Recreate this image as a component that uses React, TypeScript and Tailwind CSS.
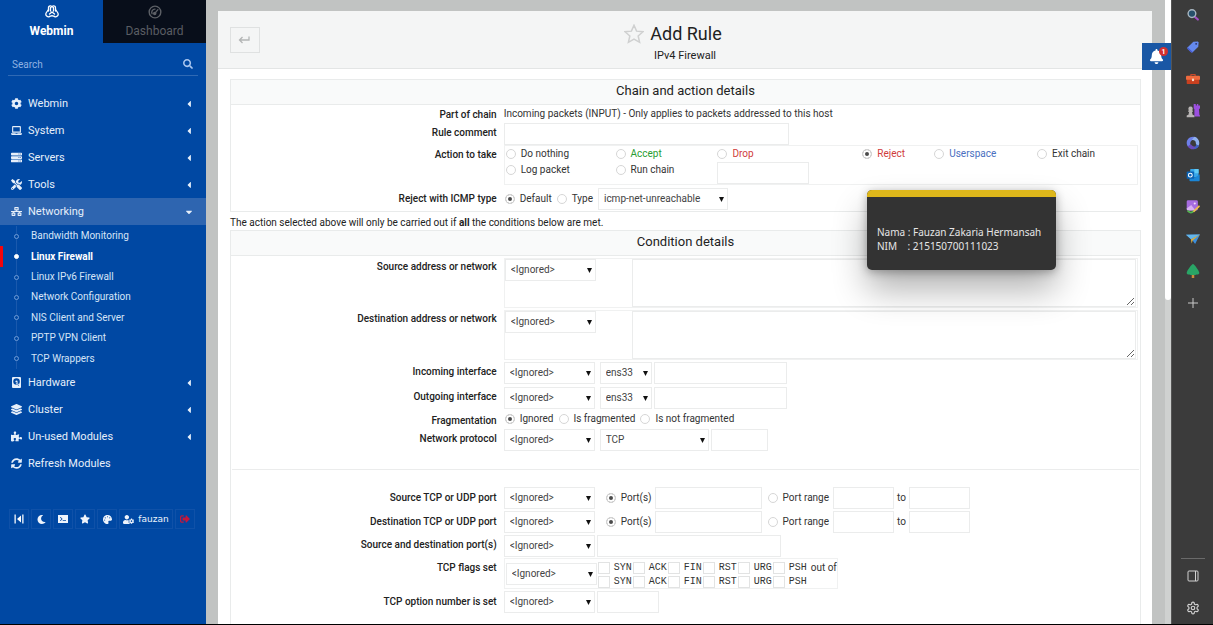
import React, { useId } from "react";
import {
  FaCog,
  FaServer,
  FaTools,
  FaNetworkWired,
  FaLayerGroup,
  FaPuzzlePiece,
  FaSyncAlt,
  FaSearch,
  FaMoon,
  FaTerminal,
  FaStar,
  FaPalette,
  FaUserCog,
  FaSignOutAlt,
  FaBell,
  FaLaptop,
  FaCaretLeft,
  FaCaretDown,
} from "react-icons/fa";
import { LuSettings } from "react-icons/lu";

const field = "h-[22px] border border-[#ebecec] bg-white px-1.5 text-[10px] text-[#444] outline-none";

function TextField({ label, className }: { label: string; className: string }) {
  return <input type="text" aria-label={label} className={`${field} ${className}`} />;
}

function SelectField({ label, value, className = "w-[91px]" }: { label: string; value: string; className?: string }) {
  return (
    <span className={`relative block shrink-0 ${className}`}>
      <select aria-label={label} defaultValue={value} className={`${field} block w-full appearance-none pl-[5px] pr-3`}>
        <option>{value}</option>
      </select>
      <svg viewBox="0 0 6 6" className="pointer-events-none absolute right-1 top-[9px] size-[5px]" aria-hidden="true">
        <path d="M0 0h6L3 6z" fill="#111" />
      </svg>
    </span>
  );
}

function Radio({
  name,
  label,
  checked = false,
  className = "gap-[5px]",
  textClass = "text-[#333]",
}: {
  name: string;
  label: string;
  checked?: boolean;
  className?: string;
  textClass?: string;
}) {
  const id = useId();
  return (
    <span className={`flex h-4 items-center whitespace-nowrap ${className}`}>
      <input
        id={id}
        type="radio"
        name={name}
        defaultChecked={checked}
        className="size-2.5 shrink-0 appearance-none rounded-full border border-[#d6d6d6] bg-white checked:bg-[#4a4a4a] checked:shadow-[inset_0_0_0_2px_#fff]"
      />
      <label htmlFor={id} className={textClass}>
        {label}
      </label>
    </span>
  );
}

function Row({ label, height, top = "pt-px", children }: { label: string; height: string; top?: string; children: React.ReactNode }) {
  return (
    <div className={`grid grid-cols-[30%_1fr] ${height}`}>
      <div className={`pr-[7px] text-right font-medium leading-[21px] text-[#222] ${top}`}>{label}</div>
      <div className="min-w-0 pr-0.5">{children}</div>
    </div>
  );
}

function Panel({ title, children }: { title: string; children: React.ReactNode }) {
  return (
    <section className="border border-[#e9ebeb]">
      <h2 className="h-[25px] border-b border-[#e9ebeb] bg-[#f9fafa] text-center text-[13px] leading-[22px] text-[#222]">{title}</h2>
      {children}
    </section>
  );
}

function AddressRow({ label }: { label: string }) {
  return (
    <Row label={label} height="h-[52px]" top="pt-0">
      <div className="pt-0.5">
        <div className="flex h-[50px] border border-[#f0f1f1] pr-px">
          <div className="w-[127px] shrink-0">
            <SelectField label={`${label} mode`} value="<Ignored>" />
          </div>
          <textarea aria-label={label} className="h-full min-w-0 flex-1 resize border border-[#ebecec] outline-none" />
        </div>
      </div>
    </Row>
  );
}

function InterfaceRow({ label }: { label: string }) {
  return (
    <Row label={label} height="h-[25px]">
      <div className="flex pt-0.5">
        <SelectField label={`${label} mode`} value="<Ignored>" />
        <SelectField label={label} value="ens33" className="ml-[5px] w-[52px]" />
        <TextField label={`${label} name`} className="ml-0.5 w-[133px]" />
      </div>
    </Row>
  );
}

function PortRow({ label, name }: { label: string; name: string }) {
  return (
    <Row label={label} height="h-6" top="pt-0.5">
      <div className="flex items-center pt-0.5">
        <SelectField label={`${label} mode`} value="<Ignored>" />
        <Radio name={name} label="Port(s)" checked className="ml-[11px] gap-[5px]" />
        <TextField label={`${label} list`} className="ml-[3px] w-[107px]" />
        <Radio name={name} label="Port range" className="ml-1.5 gap-[5px]" />
        <TextField label={`${label} from`} className="ml-1 w-[61px]" />
        <span className="mx-[3px] text-[#333]">to</span>
        <TextField label={`${label} to`} className="w-[61px]" />
      </div>
    </Row>
  );
}

const flags = ["SYN", "ACK", "FIN", "RST", "URG", "PSH"];

function FlagLine({ group, after }: { group: string; after?: string }) {
  return (
    <div className="flex h-3.5 items-center">
      {flags.map((f) => (
        <label key={f} className="flex w-[35px] items-center gap-1 whitespace-nowrap font-['Liberation_Mono',monospace] text-[#333]">
          <input
            type="checkbox"
            name={`${group}-${f}`}
            className="size-3 shrink-0 appearance-none border border-[#e2e3e3] bg-white checked:bg-[#4a4a4a]"
          />
          {f}
        </label>
      ))}
      {after && <span className="ml-[3px] whitespace-nowrap text-[#333]">{after}</span>}
    </div>
  );
}

function WebminLogo() {
  return (
    <svg viewBox="0 0 28 28" className="size-3.5" fill="none" stroke="#fff" strokeWidth="2.600" strokeLinejoin="round" strokeLinecap="round" aria-hidden="true">
      <path d="M7 12V5.500a3.500 3.500 0 0 1 7-.5a3.500 3.500 0 0 1 7 .5V12" />
      <path d="M7 9L2.500 15.500c-2.500 4.500 1 8.500 5 8 3-.5 4-2 6.500-2s3.500 1.500 6.500 2c4 .5 7.500-3.500 5-8L21 9" />
      <path d="M11 5v7M17 5v7M14 14l-5 4M14 14l5 4" />
    </svg>
  );
}

function GaugeIcon() {
  return (
    <svg viewBox="0 0 24 24" className="size-3.5" fill="none" stroke="#5d6066" strokeWidth="2.400" strokeLinecap="round" aria-hidden="true">
      <circle cx="12" cy="12" r="10" />
      <path d="M12 14l5-6M7 15a5.500 5.500 0 0 1 5-8" />
      <circle cx="11.500" cy="14.500" r="1.800" fill="#5d6066" />
    </svg>
  );
}

function DiskIcon({ className = "" }: { className?: string }) {
  return (
    <svg viewBox="0 0 22 22" className={className} aria-hidden="true">
      <path d="M4 0h14a2 2 0 0 1 2 2v18a2 2 0 0 1-2 2H4a2 2 0 0 1-2-2V2a2 2 0 0 1 2-2z" fill="#e6effa" />
      <circle cx="11" cy="9" r="6.500" fill="#0048a3" />
      <circle cx="11" cy="9" r="2.200" fill="#e6effa" />
      <path d="M11 11l4.500 7" stroke="#e6effa" strokeWidth="3.500" />
      <path d="M11 11l4.500 7" stroke="#0048a3" strokeWidth="1.200" />
    </svg>
  );
}

function CollapseIcon() {
  return (
    <svg viewBox="0 0 20 20" className="size-2.5" fill="#fff" aria-hidden="true">
      <path d="M1 1h2.500v18H1zM16.500 1H19v18h-2.500zM14 3v14l-8-7z" />
    </svg>
  );
}

const topItems = [
  { label: "Webmin", icon: FaCog },
  { label: "System", icon: FaLaptop },
  { label: "Servers", icon: FaServer },
  { label: "Tools", icon: FaTools },
];
const lowItems = [
  { label: "Hardware", icon: DiskIcon },
  { label: "Cluster", icon: FaLayerGroup },
  { label: "Un-used Modules", icon: FaPuzzlePiece },
  { label: "Refresh Modules", icon: FaSyncAlt, leaf: true },
];
const networking = [
  "Bandwidth Monitoring",
  "Linux Firewall",
  "Linux IPv6 Firewall",
  "Network Configuration",
  "NIS Client and Server",
  "PPTP VPN Client",
  "TCP Wrappers",
];

function NavItem({ label, icon: Icon, leaf = false, open = false }: { label: string; icon: React.ComponentType<{ className?: string }>; leaf?: boolean; open?: boolean }) {
  return (
    <a href="#" className={`flex h-[27px] items-center pl-[11px] pr-3 text-[11px] text-[#e6effa] ${open ? "bg-[#2e65b0]" : ""}`}>
      <Icon className="size-[11px] shrink-0" />
      <span className="ml-1.5 flex-1">{label}</span>
      {!leaf && (open ? <FaCaretDown className="size-2.5" /> : <FaCaretLeft className="size-2.5" />)}
    </a>
  );
}

function Sidebar() {
  const tool = "flex h-5 items-center justify-center border border-[#0f51a8] text-[#eef4fc]";
  return (
    <aside className="flex w-[206px] shrink-0 flex-col bg-[#0048a3]">
      <div className="grid h-[43px] grid-cols-2 text-[12px]">
        <a href="#" className="flex flex-col items-center gap-1 pt-[5px] font-bold leading-4 text-white">
          <WebminLogo />
          Webmin
        </a>
        <a href="#" className="flex flex-col items-center gap-1 bg-[#080e1a] pt-[5px] leading-4 text-[#5a5d63]">
          <GaugeIcon />
          Dashboard
        </a>
      </div>
      <div className="mx-2 mt-2.5 flex h-[23px] items-center border-b border-[#2f69b4] pl-1 pr-[5px]">
        <input
          type="search"
          aria-label="Search"
          placeholder="Search"
          className="min-w-0 flex-1 bg-transparent pt-px text-[10px] outline-none placeholder:text-[#8fb2e2]"
        />
        <FaSearch className="size-2.5 text-[#a9c6ef]" />
      </div>
      <nav className="mt-3.5">
        {topItems.map((i) => (
          <NavItem key={i.label} {...i} />
        ))}
        <NavItem label="Networking" icon={FaNetworkWired} open />
        <ul className="flex h-36 flex-col pt-px">
          {networking.map((n) => {
            const active = n === "Linux Firewall";
            return (
              <li key={n} className={`flex flex-1 items-center border-l-[3px] ${active ? "border-[#f3050c] font-bold text-white" : "border-transparent text-[#d5e4f7]"}`}>
                <span className="ml-[11px] flex w-[5px] flex-col items-center self-stretch">
                  <span className="w-px flex-1 bg-[#1a59ad]" />
                  <span className={`size-[5px] rounded-full border ${active ? "border-white bg-white" : "border-[#6f9bd6]"}`} />
                  <span className="w-px flex-1 bg-[#1a59ad]" />
                </span>
                <a href="#" className="ml-3">
                  {n}
                </a>
              </li>
            );
          })}
        </ul>
        {lowItems.map((i) => (
          <NavItem key={i.label} {...i} />
        ))}
      </nav>
      <div className="ml-[9px] mr-[11px] mt-8 flex gap-0.5">
        <button aria-label="Collapse menu" className={`${tool} w-5`}>
          <CollapseIcon />
        </button>
        <button aria-label="Night mode" className={`${tool} w-5`}>
          <FaMoon className="size-[9px]" />
        </button>
        <button aria-label="Terminal" className={`${tool} w-5`}>
          <span className="flex h-2 w-2.5 items-center justify-center bg-[#eef4fc] text-[#0048a3]">
            <FaTerminal className="size-1.5" />
          </span>
        </button>
        <button aria-label="Favorites" className={`${tool} w-5`}>
          <FaStar className="size-2.5" />
        </button>
        <button aria-label="Theme" className={`${tool} w-5`}>
          <FaPalette className="size-[9px]" />
        </button>
        <button className={`${tool} flex-1 gap-1 font-['DejaVu_Sans',sans-serif] text-[9px]`}>
          <FaUserCog className="size-[11px]" />
          fauzan
        </button>
        <button aria-label="Log out" className={`${tool} w-5`}>
          <FaSignOutAlt className="size-2.5 text-[#c4183c]" />
        </button>
      </div>
    </aside>
  );
}

const railIcons: { label: string; art: React.ReactNode }[] = [
  {
    label: "Search",
    art: (
      <>
        <path d="M12.500 12.500l4.500 4" stroke="#a34fc6" strokeWidth="3" strokeLinecap="round" />
        <circle cx="8.500" cy="8" r="5.500" fill="#27506b" stroke="#a9b7c2" strokeWidth="2" />
      </>
    ),
  },
  {
    label: "Shopping",
    art: (
      <>
        <path d="M10.500 2.500L17 2l1 1.500-.5 6-8 8-2 .5L2 12.500l.5-2z" fill="#6489ee" />
        <path d="M2 12.500l.5-2 7.500 7-2.500.5z" fill="#4858cf" />
        <circle cx="14.500" cy="5.500" r="1.300" fill="#2b3060" />
      </>
    ),
  },
  {
    label: "Tools",
    art: (
      <>
        <path d="M7 6V3.500h6V6" fill="none" stroke="#c6482a" strokeWidth="1.600" />
        <rect x="0" y="5.500" width="20" height="6" rx="1.500" fill="#ee6a3e" />
        <path d="M1 11h18v5a1 1 0 0 1-1 1H2a1 1 0 0 1-1-1z" fill="#c9401f" />
        <rect x="8.500" y="9.500" width="3" height="3.500" fill="#f5d9c7" />
      </>
    ),
  },
  {
    label: "Games",
    art: (
      <>
        <path d="M12 0h2v2h1.500V0h2v2H20v4l-1.500 1.500.7 8.500H20v2h-8V7.500L11 6V0z" fill="#9b4fe0" />
        <path d="M6.500 3.500a3.200 3.200 0 0 1 2 5.700h1.500v1.800H8.500l1 4.500 2.500 1V19H1v-2.500l2.500-1 1-4.500H3V9.200h1.500a3.200 3.200 0 0 1 2-5.700z" fill="#b8b4b4" />
      </>
    ),
  },
  {
    label: "Microsoft 365",
    art: (
      <>
        <path d="M10 1C5 1 1 5 1 10c0 2 .8 4 2 5.500 2-1 3-2 3-4.500 0-4 3-6 6-5.500L15 2.500A9 9 0 0 0 10 1z" fill="#6d7fe8" />
        <path d="M12 1.200c4 1 7 4.500 7 8.800 0 1.500-.5 3-1 4-2-.5-4-1-4-4.500C14 7 11 5 8 6z" fill="#8fb0ee" />
        <path d="M2.500 14.500C4 17.500 7 19 10 19c4 0 7-2 8.500-5.500-3 2-9 3-12-2.500-.5 2-2 3-4 3.500z" fill="#6a4bbd" />
        <path d="M18.500 13.500C17 17 14 19 10 19c2-1 4-4 4.500-7z" fill="#3f62c4" />
      </>
    ),
  },
  {
    label: "Outlook",
    art: (
      <>
        <rect x="6" y="1.500" width="12" height="12" rx="1" fill="#37a5e8" />
        <path d="M12 1.500h6v6h-6z" fill="#62cbf5" />
        <path d="M5 9l7.500 5L19.500 9v9a1 1 0 0 1-1 1H6a1 1 0 0 1-1-1z" fill="#1b86d6" />
        <rect x="1" y="5" width="10.500" height="10.500" rx="1" fill="#0a62b4" />
        <circle cx="6.200" cy="10.200" r="2.700" fill="none" stroke="#fff" strokeWidth="1.500" />
      </>
    ),
  },
  {
    label: "Image Creator",
    art: (
      <>
        <rect x="1" y="0.500" width="16" height="14.500" rx="2" fill="#a66be0" />
        <path d="M1 12l6.500-5 6 8H3a2 2 0 0 1-2-2z" fill="#d7b0f2" />
        <circle cx="12.500" cy="5" r="1.500" fill="#f5dff9" />
        <path d="M3 16c3 3 6 2 8 0" stroke="#53b34f" strokeWidth="2.600" fill="none" strokeLinecap="round" />
        <path d="M18.500 9l-7 7" stroke="#eebb4c" strokeWidth="2.600" strokeLinecap="round" />
      </>
    ),
  },
  {
    label: "Drop",
    art: (
      <>
        <path d="M0 4l20-.5L13 17l-3.500-5z" fill="#3d8fdc" />
        <path d="M0 4l20-.5L7 10.500z" fill="#63b6ec" />
        <path d="M7 10.500l13-7L9.500 12 8 16.500z" fill="#d9ad42" />
      </>
    ),
  },
  {
    label: "Tree",
    art: (
      <>
        <rect x="8.200" y="14" width="3.600" height="6" fill="#c98a3c" />
        <path d="M10 0c1.500 0 8.500 9 9 12.500.3 2-2 3-4 2.500-1.500 1-8.500 1-10 0-2 .5-4.300-.5-4-2.500C1.500 9 8.500 0 10 0z" fill="#29a566" />
      </>
    ),
  },
];

function BrowserRail() {
  return (
    <aside className="flex w-[42px] shrink-0 flex-col items-center border-l border-[#555] bg-[#3b3b3b]">
      {railIcons.map((i) => (
        <button key={i.label} aria-label={i.label} className="flex h-8 w-full items-center justify-center pb-[3px]">
          <svg viewBox="0 0 20 20" className="size-3.5">
            {i.art}
          </svg>
        </button>
      ))}
      <button aria-label="Add" className="flex h-8 w-full items-center justify-center pb-[3px]">
        <svg viewBox="0 0 10 10" className="size-2.5" stroke="#c9c9c9" strokeWidth="1">
          <path d="M5 0v10M0 5h10" />
        </svg>
      </button>
      <div className="mt-auto w-6 border-t border-[#6a6a6a]" />
      <button aria-label="Toggle panel" className="flex h-8 w-full items-center justify-center pt-0.5">
        <svg viewBox="0 0 12 12" className="size-3" fill="none" stroke="#d2d2d2">
          <rect x="1" y="1" width="10" height="10" rx="1" />
          <path d="M8.500 1v10" />
        </svg>
      </button>
      <button aria-label="Settings" className="flex h-[33px] w-full items-center justify-center">
        <LuSettings className="size-3.5 text-[#d2d2d2]" />
      </button>
    </aside>
  );
}

export default function App() {
  return (
    <div className="relative flex h-screen overflow-hidden border-b border-black bg-[#c1c3c2] font-[Roboto,sans-serif] text-[10px] leading-4 text-[#333]">
      <Sidebar />
      <main className="flex min-w-0 flex-1 flex-col overflow-hidden pl-3 pr-[13px] pt-[11px]">
        <div className="shrink-0 bg-white pb-10">
          <header className="relative flex h-[58px] flex-col items-center border-b border-[#e3e5e5] bg-[#f4f5f5] pt-[11px]">
            <button aria-label="Go back" className="absolute left-3 top-4 flex h-[26px] w-[30px] items-center justify-center border border-[#dfe1e1] pr-0.5">
              <svg viewBox="0 0 12 8" className="h-2 w-3" fill="none" stroke="#b3b5b5" strokeWidth="1.300" aria-hidden="true">
                <path d="M11 .5V4H1.500M4.500 1L1.500 4l3 3" />
              </svg>
            </button>
            <h1 className="flex h-6 items-center gap-1.5 pr-6 text-[18px] text-[#222]">
              <svg viewBox="0 0 24 24" className="size-5" fill="none" stroke="#cfd0d0" strokeWidth="1.800" aria-hidden="true">
                <path d="M12 1.500l3.100 7.100 7.700.7-5.800 5.100 1.700 7.600L12 18l-6.700 4 1.700-7.600-5.800-5.100 7.700-.7z" />
              </svg>
              Add Rule
            </h1>
            <p className="mt-0.5 text-[11px] text-[#222]">IPv4 Firewall</p>
          </header>

          <form className="pl-3 pr-[11px] pt-2.5" onSubmit={(e) => e.preventDefault()}>
            <Panel title="Chain and action details">
              <Row label="Part of chain" height="h-4" top="-mt-px">
                <p className="pt-px">Incoming packets (INPUT) - Only applies to packets addressed to this host</p>
              </Row>
              <Row label="Rule comment" height="h-[23px]">
                <div className="pt-0.5">
                  <TextField label="Rule comment" className="block w-[285px]" />
                </div>
              </Row>
              <Row label="Action to take" height="h-[42px]" top="pt-0">
                <div className="mt-px grid h-10 grid-cols-[110fr_102fr_145fr_72fr_103fr_100fr] grid-rows-[16px_22px] items-start border border-[#f0f1f1] pl-px">
                  <Radio name="action" label="Do nothing" />
                  <Radio name="action" label="Accept" textClass="text-[#2a9d32]" />
                  <Radio name="action" label="Drop" textClass="text-[#d03c3c]" />
                  <Radio name="action" label="Reject" checked textClass="text-[#d03c3c]" />
                  <Radio name="action" label="Userspace" textClass="text-[#4a6fc0]" />
                  <Radio name="action" label="Exit chain" />
                  <Radio name="action" label="Log packet" />
                  <Radio name="action" label="Run chain" />
                  <TextField label="Chain name" className="w-[92px]" />
                </div>
              </Row>
              <Row label="Reject with ICMP type" height="h-[25px]" top="pt-0.5">
                <div className="flex items-center gap-[5px] pl-px pt-0.5">
                  <Radio name="icmp" label="Default" checked />
                  <Radio name="icmp" label="Type" />
                  <SelectField label="ICMP type" value="icmp-net-unreachable" className="w-[130px]" />
                </div>
              </Row>
            </Panel>

            <p className="h-[18px] pt-[3px] text-[#222]">
              The action selected above will only be carried out if <b>all</b> the conditions below are met.
            </p>

            <Panel title="Condition details">
              <AddressRow label="Source address or network" />
              <AddressRow label="Destination address or network" />
              <InterfaceRow label="Incoming interface" />
              <InterfaceRow label="Outgoing interface" />
              <Row label="Fragmentation" height="h-[17px]" top="pt-0">
                <div className="flex gap-[5px] pl-px pt-px">
                  <Radio name="frag" label="Ignored" checked />
                  <Radio name="frag" label="Is fragmented" />
                  <Radio name="frag" label="Is not fragmented" />
                </div>
              </Row>
              <Row label="Network protocol" height="h-[25px]">
                <div className="flex pt-0.5">
                  <SelectField label="Network protocol mode" value="<Ignored>" />
                  <SelectField label="Network protocol" value="TCP" className="ml-[5px] w-[109px]" />
                  <TextField label="Protocol number" className="ml-0.5 w-[57px]" />
                </div>
              </Row>
              <hr className="mx-px mb-[15px] mt-[17px] border-[#ebecec]" />
              <PortRow label="Source TCP or UDP port" name="sport" />
              <PortRow label="Destination TCP or UDP port" name="dport" />
              <Row label="Source and destination port(s)" height="h-6">
                <div className="flex gap-0.5 pt-0.5">
                  <SelectField label="Ports mode" value="<Ignored>" />
                  <TextField label="Ports" className="w-[184px]" />
                </div>
              </Row>
              <Row label="TCP flags set" height="h-8" top="pt-0">
                <div className="mt-px inline-flex h-[31px] items-center border border-[#f0f1f1] pl-px">
                  <SelectField label="TCP flags mode" value="<Ignored>" />
                  <div className="ml-px pt-0.5">
                    <FlagLine group="set" after="out of" />
                    <FlagLine group="mask" />
                  </div>
                </div>
              </Row>
              <Row label="TCP option number is set" height="h-16" top="pt-0.5">
                <div className="flex gap-0.5 pt-0.5">
                  <SelectField label="TCP option mode" value="<Ignored>" />
                  <TextField label="TCP option number" className="w-[62px]" />
                </div>
              </Row>
            </Panel>
          </form>
        </div>
      </main>
      <div className="flex w-1.5 shrink-0 flex-col bg-[#cfd1d0]">
        <div className="h-[48%] rounded-b-full bg-white" />
      </div>
      <BrowserRail />

      <button aria-label="Notifications" className="absolute right-[42px] top-[43px] flex h-[27px] w-[29px] items-center justify-center bg-[#1957a5] text-white">
        <FaBell className="size-[15px]" />
        <span className="absolute right-[3px] top-1 flex size-[9px] items-center justify-center rounded-full bg-[#d2302f] text-[7px] font-bold">1</span>
      </button>

      <div className="absolute right-[157px] top-[190px] h-20 w-[189px] rounded-[5px] bg-[#333] font-['Noto_Sans',sans-serif] leading-[14px] text-[#e6e6e6] shadow-[0_20px_34px_rgba(0,0,0,0.3),0_2px_10px_rgba(0,0,0,0.3)]">
        <div className="h-[7px] rounded-t-[5px] bg-[#deb71b]" />
        <p className="whitespace-pre pl-2.5 pt-7">{"Nama : Fauzan Zakaria Hermansah\nNIM    : 215150700111023"}</p>
      </div>
    </div>
  );
}
